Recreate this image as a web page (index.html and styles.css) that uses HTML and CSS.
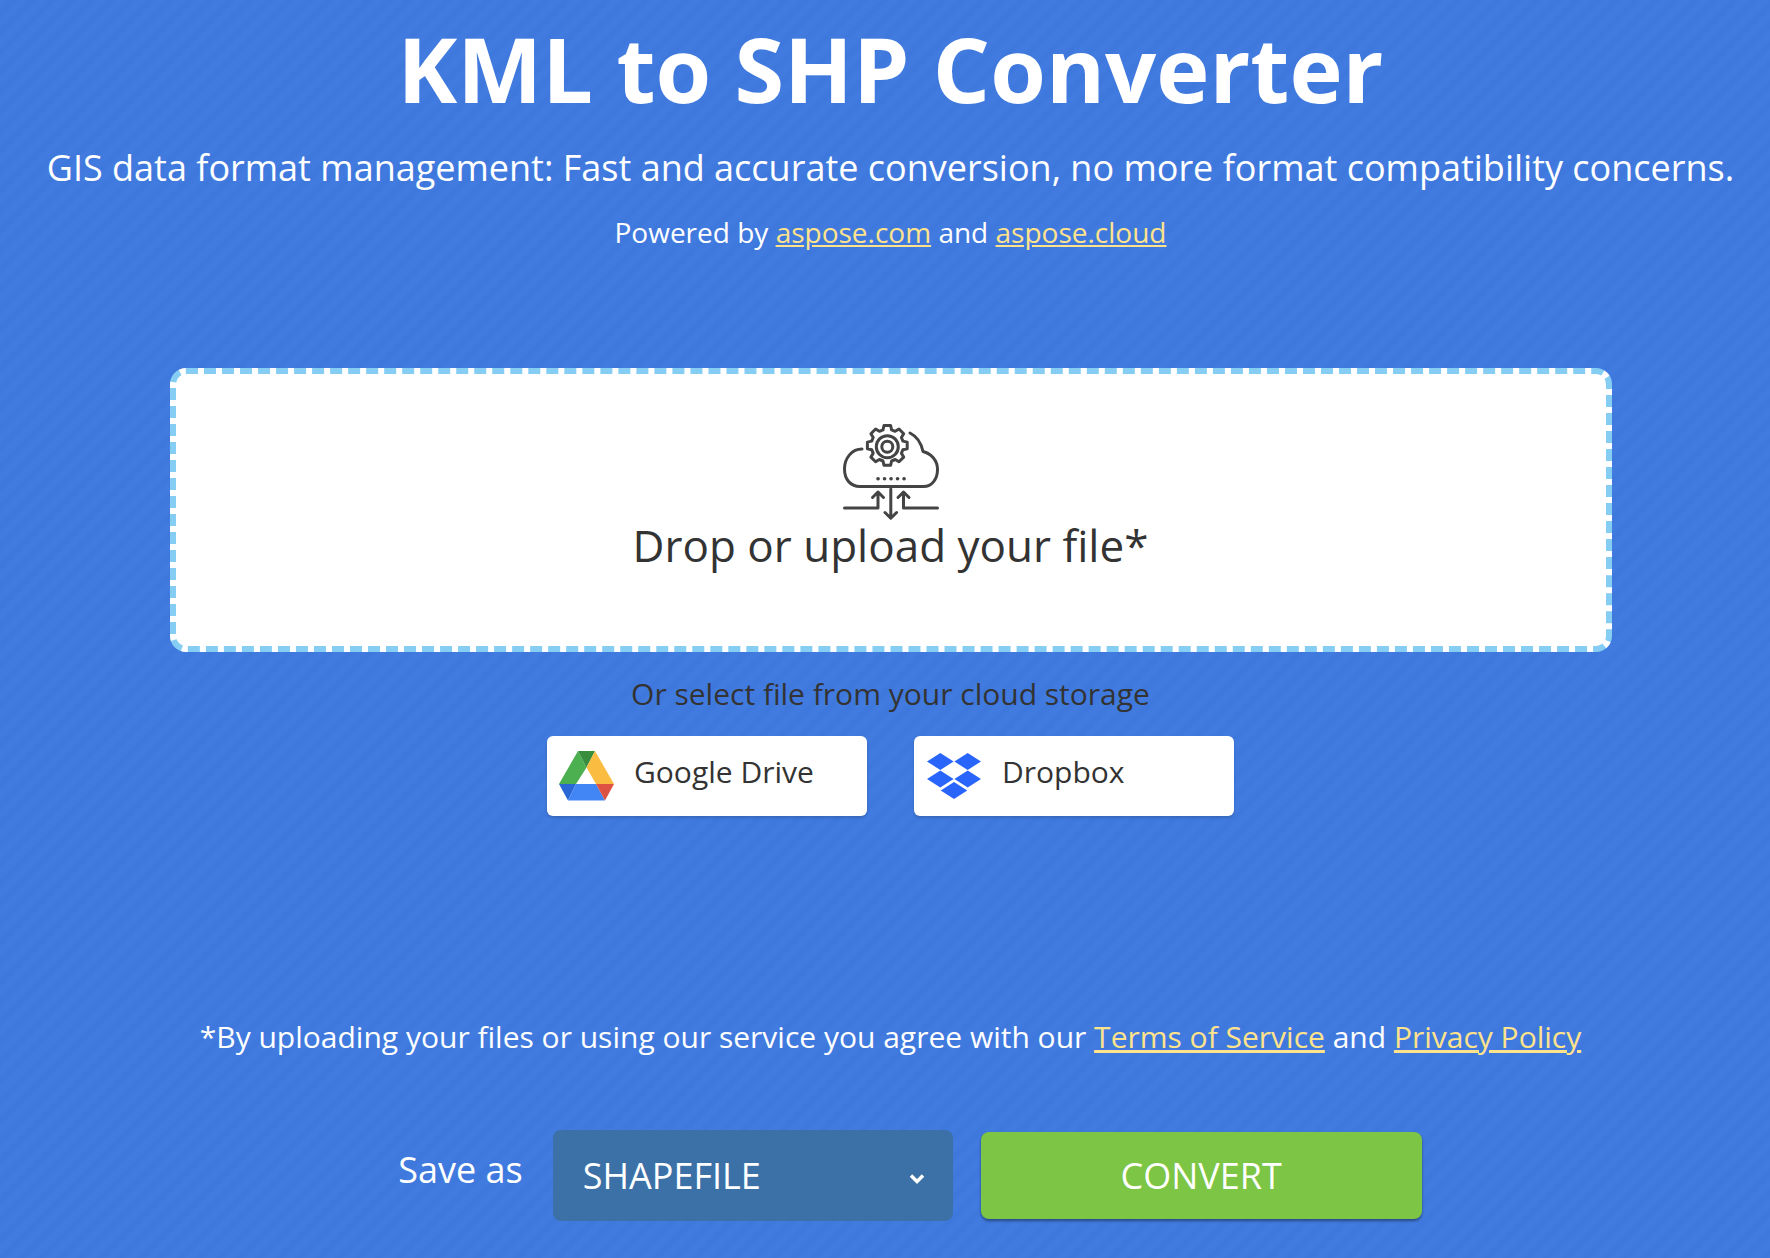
FILE: index.html
```html
<!DOCTYPE html>
<html lang="en">
<head>
<meta charset="utf-8">
<title>KML to SHP Converter</title>
<link rel="stylesheet" href="styles.css">
</head>
<body>
<main class="page">
  <h1 class="title">KML to SHP Converter</h1>
  <p class="subtitle">GIS data format management: Fast and accurate conversion, no more format compatibility concerns.</p>
  <p class="powered">Powered by <a href="#">aspose.com</a> and <a href="#">aspose.cloud</a></p>

  <section class="dropzone">
    <svg class="cloud" viewBox="0 0 96 96" fill="none" stroke="#444" stroke-width="3" stroke-linecap="round" stroke-linejoin="round">
      <path d="M19 25C9 25 1.500 34 1.500 45S8 62.500 17 62.500H80.500C89 62.500 94.500 55 94.500 45.500S88 29.500 80 27.500C78 18 73 12 67 9"/>
      <circle cx="44.300" cy="22.700" r="11"/>
      <circle cx="44.300" cy="22.700" r="5.500"/>
      <path d="M41 1.500h6.600l1 4.300 3.600 1.500 3.800-2.300 4.700 4.700-2.300 3.800 1.500 3.600 4.300 1v6.600l-4.300 1-1.500 3.600 2.300 3.800-4.700 4.700-3.800-2.300-3.600 1.500-1 4.300H41l-1-4.300-3.600-1.500-3.800 2.300-4.700-4.700 2.300-3.800-1.500-3.600-4.300-1v-6.600l4.300-1 1.500-3.600-2.300-3.800 4.700-4.700 3.800 2.300 3.600-1.500z"/>
      <path d="M35 54.700h.1M41.500 54.700h.1M48 54.700h.1M54.500 54.700h.1M61 54.700h.1" stroke-width="3.600"/>
      <path d="M1.500 84H35V68M29.500 73.500 35 68l5.500 5.500"/>
      <path d="M94.500 84H60.500V68M55 73.500 60.500 68l5.500 5.500"/>
      <path d="M47.800 65V94M42 88.500l5.800 5.800 5.800-5.800"/>
    </svg>
    <div class="drop-label">Drop or upload your file*</div>
  </section>

  <p class="cloud-label">Or select file from your cloud storage</p>
  <div class="cloud-buttons">
    <a class="cloud-btn" href="#">
      <svg class="drive" viewBox="0 0 55 50">
        <path fill="#4caf50" d="M19 0 27.500 16.500 17 33H0z"/>
        <path fill="#388e3c" d="M19 0H36L27.500 16.500z"/>
        <path fill="#fbbc42" d="M36 0 55 33H37L27.500 16.500z"/>
        <path fill="#2a67d6" d="M0 33H17L9 49.500z"/>
        <path fill="#4285f4" d="M17 33H37L46 49.500H9z"/>
        <path fill="#dd5240" d="M37 33H55L46 49.500z"/>
      </svg>
      <span class="cloud-name">Google Drive</span>
    </a>
    <a class="cloud-btn" href="#">
      <svg class="dropbox" viewBox="0 0 54 46" fill="#2a65fb">
        <path d="M13.300 0 26.600 8.500 13.300 17 0 8.500z"/>
        <path d="M40.700 0 54 8.500 40.700 17 27.400 8.500z"/>
        <path d="M13.300 17.600 26.600 26.100 13.300 34.600 0 26.100z"/>
        <path d="M40.700 17.600 54 26.100 40.700 34.600 27.400 26.100z"/>
        <path d="M27 29 40.300 37.500 27 46 13.700 37.500z"/>
      </svg>
      <span class="cloud-name">Dropbox</span>
    </a>
  </div>

  <p class="terms">*By uploading your files or using our service you agree with our <a href="#">Terms of Service</a> and <a href="#">Privacy Policy</a></p>

  <div class="actions">
    <span class="save-as">Save as</span>
    <div class="select">
      <span>SHAPEFILE</span>
      <svg class="chevron" viewBox="0 0 16 12" fill="none" stroke="#fff" stroke-width="3.400"><path d="M2 2.500 8 8.500 14 2.500"/></svg>
    </div>
    <button class="convert" type="button">CONVERT</button>
  </div>
</main>
</body>
</html>
```
FILE: styles.css
```css
* { box-sizing: border-box; }
html, body { margin: 0; padding: 0; }
body {
  width: 1770px;
  height: 1258px;
  overflow: hidden;
  font-family: "Open Sans", sans-serif;
  color: #fff;
  background-color: #407ade;
  background-image: repeating-linear-gradient(135deg, #417bdf 0, #417bdf 4px, #3f78dc 8px, #3f78dc 10px, #417bdf 14px);
}
.page {
  display: flex;
  flex-direction: column;
  align-items: center;
  height: 100%;
  padding-left: 11px;
}
.title {
  margin: 8px 0 0;
  font-size: 90px;
  line-height: 120px;
  font-weight: 700;
}
.subtitle {
  margin: 15px 0 0;
  font-size: 36px;
  line-height: 50px;
}
.powered {
  margin: 19px 0 0;
  font-size: 28px;
  line-height: 40px;
}
a { color: #ffe38c; text-decoration: underline; }
.dropzone {
  margin-top: 116px;
  width: 1442px;
  height: 284px;
  background: #fff;
  border: 6px dashed #85cdf3;
  border-radius: 16px;
  display: flex;
  flex-direction: column;
  align-items: center;
  padding-top: 50px;
  color: #333;
}
.cloud { width: 96px; height: 96px; display: block; }
.drop-label {
  font-size: 44px;
  line-height: 60px;
  margin-top: -5px;
}
.cloud-label {
  margin: 22px 0 0;
  font-size: 30px;
  line-height: 40px;
  color: #333;
}
.cloud-buttons {
  display: flex;
  gap: 47px;
  margin-top: 22px;
}
.cloud-btn {
  width: 320px;
  height: 80px;
  background: #fff;
  border-radius: 6px;
  display: flex;
  align-items: center;
  color: #333;
  text-decoration: none;
  font-size: 30px;
  box-shadow: 0 2px 3px rgba(0,0,0,.15);
}
.cloud-name { margin-bottom: 9px; }
.drive { width: 55px; height: 50px; margin-left: 12px; margin-right: 20px; }
.dropbox { width: 54px; height: 46px; margin-left: 13px; margin-right: 21px; }
.terms {
  margin: 201px 0 0;
  font-size: 30px;
  line-height: 40px;
}
.actions {
  display: flex;
  align-items: center;
  margin-top: 73px;
  margin-left: 39px;
}
.save-as { font-size: 36px; line-height: 48px; margin-right: 30px; margin-top: -12px; }
.select {
  width: 400px;
  height: 91px;
  background: #3c71a8;
  border-radius: 8px;
  display: flex;
  align-items: center;
  justify-content: space-between;
  padding: 0 28px 0 30px;
  font-size: 36px;
}
.chevron { width: 16px; height: 12px; margin-top: 7px; }
.convert {
  width: 441px;
  height: 87px;
  margin-left: 28px;
  border: 0;
  border-radius: 8px;
  background: #7dc544;
  color: #fff;
  font-family: inherit;
  font-size: 36px;
  box-shadow: 0 2px 3px rgba(0,0,0,.4);
}
```
